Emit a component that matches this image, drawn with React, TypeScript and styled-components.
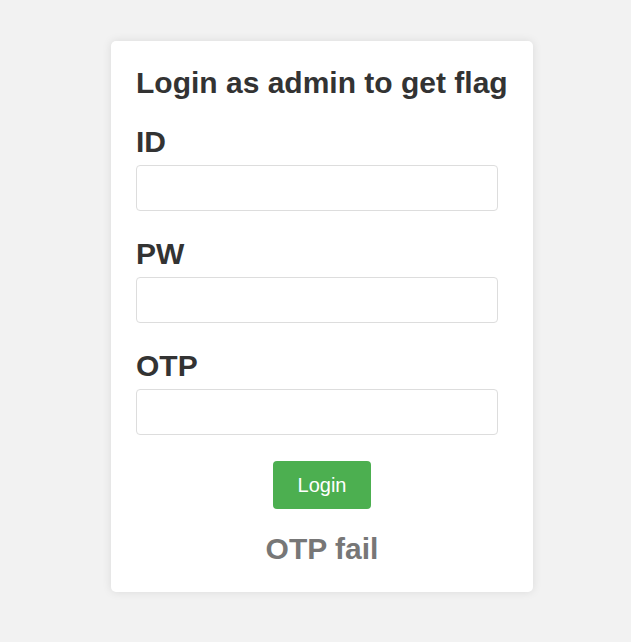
import styled, { createGlobalStyle } from 'styled-components';

const GlobalStyle = createGlobalStyle`
	html, body {
		margin: 0;
		background: #f2f2f2;
		font-family: 'Liberation Sans', Arial, sans-serif;
	}
`;

const Page = styled.div`
	display: flex;
	justify-content: center;
	padding: 41px 0 40px 13px;
`;

const Card = styled.form`
	width: 422px;
	box-sizing: border-box;
	padding: 25px 25px 26px;
	background: #fff;
	border-radius: 5px;
	box-shadow: 0 0 10px rgba(0, 0, 0, 0.1);
	display: flex;
	flex-direction: column;
`;

const Title = styled.h2`
	margin: 0;
	font-size: 30px;
	font-weight: bold;
	color: #333;
	line-height: normal;
`;

const Field = styled.div`
	margin-top: 25px;

	& + & {
		margin-top: 26px;
	}
`;

const Label = styled.label`
	display: block;
	margin-bottom: 6px;
	font-size: 30px;
	font-weight: bold;
	color: #333;
	line-height: normal;
`;

const Input = styled.input`
	display: block;
	width: calc(100% - 10px);
	height: 46px;
	box-sizing: border-box;
	border: 1px solid #ddd;
	border-radius: 4px;
	padding: 0 10px;
	font-size: 16px;
	font-family: inherit;
	outline: none;
`;

const Button = styled.button`
	align-self: center;
	margin-top: 26px;
	padding: 12px 25px;
	font-family: inherit;
	font-size: 20px;
	line-height: 24px;
	color: #fff;
	background: #4caf50;
	border: none;
	border-radius: 4px;
	cursor: pointer;
`;

const Message = styled.h2`
	margin: 23px 0 0;
	text-align: center;
	font-size: 30px;
	font-weight: bold;
	color: #777;
	line-height: normal;
`;

const fields = ['ID', 'PW', 'OTP'];

export default function App() {
	return (
		<>
			<GlobalStyle />
			<Page>
				<Card onSubmit={(e) => e.preventDefault()}>
					<Title>Login as admin to get flag</Title>
					{fields.map((name) => (
						<Field key={name}>
							<Label htmlFor={name}>{name}</Label>
							<Input id={name} type={name === 'PW' ? 'password' : 'text'} />
						</Field>
					))}
					<Button type="submit">Login</Button>
					<Message>OTP fail</Message>
				</Card>
			</Page>
		</>
	);
}
